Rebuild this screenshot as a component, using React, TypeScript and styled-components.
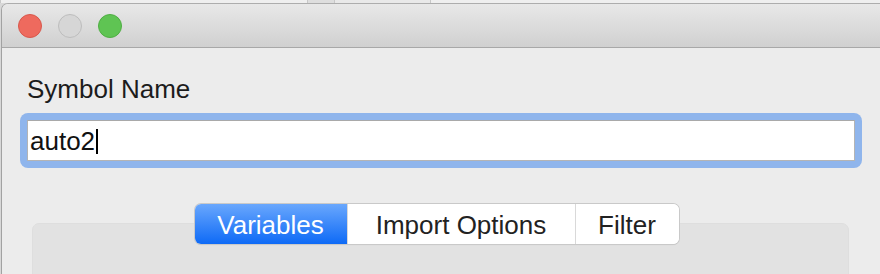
import React from 'react';
import styled, { createGlobalStyle } from 'styled-components';

const GlobalStyle = createGlobalStyle`
  html, body {
    margin: 0;
    padding: 0;
    background: #e9e9e9;
    overflow: hidden;
  }
  body {
    font-family: "Liberation Sans", Arial, sans-serif;
  }
`;

const Desktop = styled.div`
  width: 880px;
  height: 274px;
  overflow: hidden;
  background: #d8d8d8;
`;

const BehindStrip = styled.div`
  height: 3px;
  display: flex;
  background: #efefef;
`;

const BehindCell = styled.div<{ w: number; tone: string }>`
  width: ${(p) => p.w}px;
  background: ${(p) => p.tone};
  border-left: 1px solid #c8c8c8;
`;

const Window = styled.div`
  width: 881px;
  margin-left: 1px;
  height: 271px;
  border-left: 1px solid #a2a2a2;
  border-top: 1px solid #adadad;
  border-top-left-radius: 7px;
  overflow: hidden;
  background: #ececec;
`;

const TitleBar = styled.div`
  height: 43px;
  display: flex;
  align-items: center;
  gap: 16px;
  padding-left: 16px;
  background: linear-gradient(#e8e8e8, #d0d0d0);
  border-bottom: 1px solid #a8a8a8;
`;

const Light = styled.span<{ fill: string; edge: string }>`
  width: 22px;
  height: 22px;
  border-radius: 50%;
  background: ${(p) => p.fill};
  border: 1px solid ${(p) => p.edge};
`;

const Content = styled.div`
  padding: 26px 21px 0 18px;
`;

const Label = styled.div`
  font-size: 26px;
  line-height: 30px;
  color: #1c1c1c;
  padding-left: 7px;
`;

const FocusRing = styled.div`
  margin-top: 9px;
  padding: 7px;
  border-radius: 8px;
  background: #8fb5ec;
`;

const Field = styled.div`
  height: 39px;
  border: 1px solid #b4b4b4;
  border-top-color: #a9a9a9;
  background: #fff;
  display: flex;
  align-items: center;
  padding-left: 2px;
  font-size: 26px;
  line-height: 30px;
  color: #111;
`;

const Caret = styled.span`
  width: 2px;
  height: 25px;
  margin-left: 1px;
  margin-top: 2px;
  background: #000;
`;

const TabArea = styled.div`
  margin: 36px 13px 0 12px;
`;

const TabRow = styled.div`
  position: relative;
  z-index: 1;
  display: flex;
  justify-content: center;
  padding-right: 8px;
`;

const Segments = styled.div`
  display: flex;
  height: 40px;
  border-radius: 6px;
  overflow: hidden;
  box-shadow: 0 0 0 1px #c9c9c9, 0 1px 1px rgba(0, 0, 0, 0.12);
  background: #fff;
`;

const Segment = styled.div<{ w: number; active?: boolean }>`
  width: ${(p) => p.w}px;
  display: flex;
  align-items: center;
  justify-content: center;
  padding-top: 1px;
  font-size: 26px;
  line-height: 30px;
  color: ${(p) => (p.active ? '#fff' : '#222')};
  background: ${(p) => (p.active ? 'linear-gradient(#69a7fd, #0e6af6)' : '#fff')};
  & + & {
    border-left: 1px solid #d9d9d9;
  }
`;

const GroupBox = styled.div`
  margin-top: -21px;
  height: 80px;
  border-radius: 7px;
  background: #e2e2e2;
  border: 1px solid #dedede;
`;

const App = () => {
  return (
    <>
      <GlobalStyle />
      <Desktop>
        <BehindStrip>
          <BehindCell w={307} tone="#efefef" />
          <BehindCell w={27} tone="#dedede" />
          <BehindCell w={95} tone="#e9e9e9" />
          <BehindCell w={451} tone="#efefef" />
        </BehindStrip>
        <Window>
          <TitleBar>
            <Light fill="#ee6a5e" edge="#d8584c" />
            <Light fill="#d6d6d6" edge="#bdbdbd" />
            <Light fill="#5fc453" edge="#4fae43" />
          </TitleBar>
          <Content>
            <Label>Symbol Name</Label>
            <FocusRing>
              <Field>
                auto2
                <Caret />
              </Field>
            </FocusRing>
            <TabArea>
              <TabRow>
                <Segments>
                  <Segment w={152} active>Variables</Segment>
                  <Segment w={227}>Import Options</Segment>
                  <Segment w={103}>Filter</Segment>
                </Segments>
              </TabRow>
              <GroupBox />
            </TabArea>
          </Content>
        </Window>
      </Desktop>
    </>
  );
};

export default App;
